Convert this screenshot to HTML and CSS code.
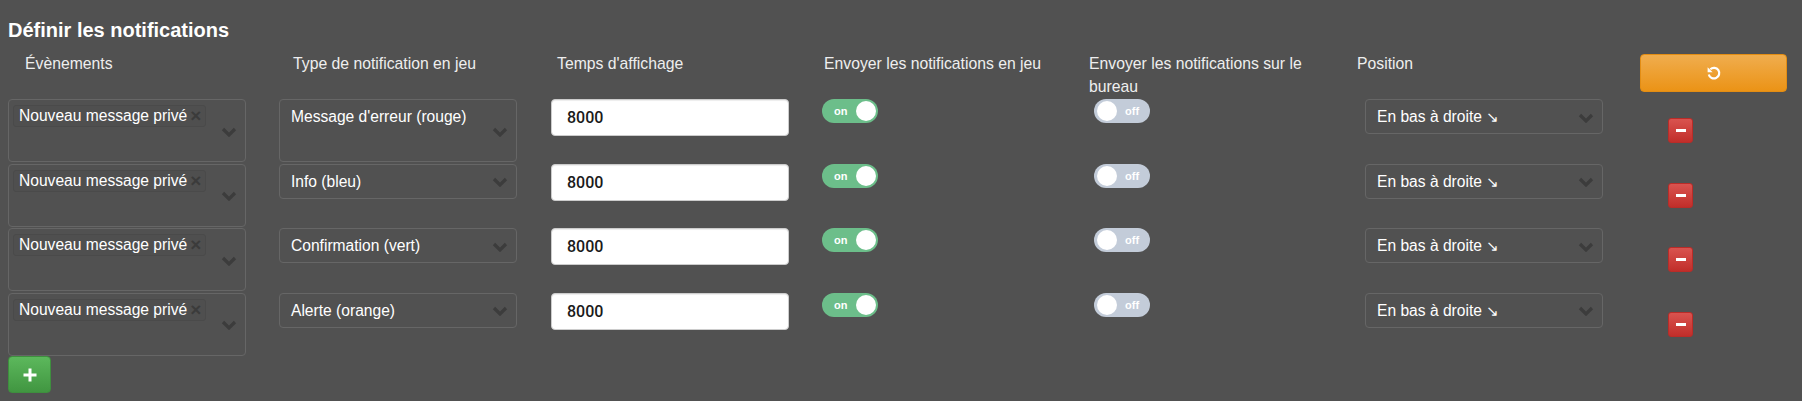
FILE: index.html
```html
<!DOCTYPE html>
<html lang="fr">
<head>
<meta charset="utf-8">
<title>Définir les notifications</title>
<link rel="stylesheet" href="styles.css">
</head>
<body>
<div class="panel">
  <h2 class="title">Définir les notifications</h2>
  <div class="head">
    <div class="hcell">Évènements</div>
    <div class="hcell">Type de notification en jeu</div>
    <div class="hcell">Temps d'affichage</div>
    <div class="hcell">Envoyer les notifications en jeu</div>
    <div class="hcell wrap">Envoyer les notifications sur le bureau</div>
    <div class="hcell">Position</div>
    <div class="hcell"><button class="btn reset" aria-label="Réinitialiser"><svg width="16" height="16" viewBox="0 0 16 16"><path d="M4.3 4.3 A5.3 5.3 0 1 1 2.8 9.4" fill="none" stroke="#fff" stroke-width="2.2"/><path d="M1.6 2.2 L1.6 7.2 L6.6 7.2 Z" fill="#fff"/></svg></button></div>
  </div>

  <div class="rows">
    <div class="row">
      <div class="multi"><span class="chip">Nouveau message privé<span class="x">×</span></span><svg class="chev" viewBox="0 0 16 10"><path d="M2 2 L8 8 L14 2" fill="none" stroke="#3c3c3c" stroke-width="3.2"/></svg></div>
      <div class="select tall"><span class="label">Message d'erreur (rouge)</span><svg class="chev" viewBox="0 0 16 10"><path d="M2 2 L8 8 L14 2" fill="none" stroke="#3c3c3c" stroke-width="3.2"/></svg></div>
      <div class="field">8000</div>
      <div class="toggle on"><span class="tt">on</span><span class="knob"></span></div>
      <div class="toggle off"><span class="knob"></span><span class="tt">off</span></div>
      <div class="select"><span class="label">En bas à droite <span class="arr">↘</span></span><svg class="chev" viewBox="0 0 16 10"><path d="M2 2 L8 8 L14 2" fill="none" stroke="#3c3c3c" stroke-width="3.2"/></svg></div>
      <button class="btn minus" aria-label="Supprimer"><span class="bar"></span></button>
    </div>
    <div class="row">
      <div class="multi"><span class="chip">Nouveau message privé<span class="x">×</span></span><svg class="chev" viewBox="0 0 16 10"><path d="M2 2 L8 8 L14 2" fill="none" stroke="#3c3c3c" stroke-width="3.2"/></svg></div>
      <div class="select"><span class="label">Info (bleu)</span><svg class="chev" viewBox="0 0 16 10"><path d="M2 2 L8 8 L14 2" fill="none" stroke="#3c3c3c" stroke-width="3.2"/></svg></div>
      <div class="field">8000</div>
      <div class="toggle on"><span class="tt">on</span><span class="knob"></span></div>
      <div class="toggle off"><span class="knob"></span><span class="tt">off</span></div>
      <div class="select"><span class="label">En bas à droite <span class="arr">↘</span></span><svg class="chev" viewBox="0 0 16 10"><path d="M2 2 L8 8 L14 2" fill="none" stroke="#3c3c3c" stroke-width="3.2"/></svg></div>
      <button class="btn minus" aria-label="Supprimer"><span class="bar"></span></button>
    </div>
    <div class="row">
      <div class="multi"><span class="chip">Nouveau message privé<span class="x">×</span></span><svg class="chev" viewBox="0 0 16 10"><path d="M2 2 L8 8 L14 2" fill="none" stroke="#3c3c3c" stroke-width="3.2"/></svg></div>
      <div class="select"><span class="label">Confirmation (vert)</span><svg class="chev" viewBox="0 0 16 10"><path d="M2 2 L8 8 L14 2" fill="none" stroke="#3c3c3c" stroke-width="3.2"/></svg></div>
      <div class="field">8000</div>
      <div class="toggle on"><span class="tt">on</span><span class="knob"></span></div>
      <div class="toggle off"><span class="knob"></span><span class="tt">off</span></div>
      <div class="select"><span class="label">En bas à droite <span class="arr">↘</span></span><svg class="chev" viewBox="0 0 16 10"><path d="M2 2 L8 8 L14 2" fill="none" stroke="#3c3c3c" stroke-width="3.2"/></svg></div>
      <button class="btn minus" aria-label="Supprimer"><span class="bar"></span></button>
    </div>
    <div class="row">
      <div class="multi"><span class="chip">Nouveau message privé<span class="x">×</span></span><svg class="chev" viewBox="0 0 16 10"><path d="M2 2 L8 8 L14 2" fill="none" stroke="#3c3c3c" stroke-width="3.2"/></svg></div>
      <div class="select"><span class="label">Alerte (orange)</span><svg class="chev" viewBox="0 0 16 10"><path d="M2 2 L8 8 L14 2" fill="none" stroke="#3c3c3c" stroke-width="3.2"/></svg></div>
      <div class="field">8000</div>
      <div class="toggle on"><span class="tt">on</span><span class="knob"></span></div>
      <div class="toggle off"><span class="knob"></span><span class="tt">off</span></div>
      <div class="select"><span class="label">En bas à droite <span class="arr">↘</span></span><svg class="chev" viewBox="0 0 16 10"><path d="M2 2 L8 8 L14 2" fill="none" stroke="#3c3c3c" stroke-width="3.2"/></svg></div>
      <button class="btn minus" aria-label="Supprimer"><span class="bar"></span></button>
    </div>
  </div>

  <button class="btn add" aria-label="Ajouter"><svg width="14" height="14" viewBox="0 0 14 14"><path d="M7 0.5 V13.5 M0.5 7 H13.5" stroke="#fff" stroke-width="3"/></svg></button>
</div>
</body>
</html>
```

FILE: styles.css
```css
html, body {
  margin: 0;
  padding: 0;
  background: #515151;
}

body {
  font-family: "Liberation Sans", Arial, sans-serif;
  color: #f0f0f0;
  width: 1802px;
  height: 401px;
  overflow: hidden;
}

.panel {
  padding: 18px 8px 0 8px;
}

.title {
  margin: 0;
  font-size: 20px;
  line-height: 24px;
  font-weight: bold;
  color: #fff;
}

.head {
  display: grid;
  grid-template-columns: 268px 264px 267px 265px 268px 283px 147px;
  padding-left: 17px;
  margin-top: 10px;
  height: 47px;
}

.hcell {
  font-size: 15.75px;
  line-height: 23px;
  color: #eeeeee;
}

.hcell.wrap {
  padding-right: 40px;
}

.btn {
  border: 1px solid transparent;
  border-radius: 4px;
  padding: 0;
  margin: 0;
  display: flex;
  align-items: center;
  justify-content: center;
  cursor: pointer;
}

.reset {
  width: 147px;
  height: 38px;
  margin-top: 2px;
  background: linear-gradient(#f0ad4e, #eb9316);
  border-color: #e38d13;
}

.rows {
  display: flex;
  flex-direction: column;
  gap: 1.5px;
}

.row {
  display: grid;
  grid-template-columns: 271px 272px 271px 272px 271px 303px 25px;
  align-items: start;
  height: 63px;
}

.multi {
  box-sizing: border-box;
  width: 238px;
  height: 63px;
  border: 1px solid #666;
  border-radius: 4px;
  position: relative;
  padding: 5px 4px;
}

.chip {
  display: inline-flex;
  align-items: center;
  box-sizing: border-box;
  height: 22px;
  padding: 0 4px 0 5px;
  border: 1px solid #4a4a4a;
  border-radius: 3px;
  background: #4f4f4f;
  font-size: 15.6px;
  color: #fff;
  white-space: nowrap;
}

.chip .x {
  font-size: 19px;
  line-height: 16px;
  font-weight: bold;
  color: #3b3b3b;
  margin-left: 3px;
}

.chev {
  position: absolute;
  right: 8px;
  top: 50%;
  width: 16px;
  height: 10px;
  margin-top: -4px;
}

.select {
  box-sizing: border-box;
  width: 238px;
  height: 35px;
  border: 1px solid #666;
  border-radius: 4px;
  position: relative;
  padding: 0 11px;
  font-size: 15.6px;
  line-height: 33px;
  color: #fff;
  white-space: nowrap;
}

.select.tall {
  height: 63px;
}

.select .label {
  display: block;
}

.arr {
  font-family: "DejaVu Sans", sans-serif;
  font-size: 15px;
}

.field {
  box-sizing: border-box;
  width: 238px;
  height: 37px;
  background: #fff;
  border: 1px solid #ccc;
  border-radius: 4px;
  box-shadow: inset 0 1px 1px rgba(0, 0, 0, 0.075);
  padding-left: 15px;
  font-family: Roboto, "Liberation Sans", sans-serif;
  font-size: 16px;
  font-weight: 500;
  line-height: 35px;
  color: #1a1a1a;
}

.toggle {
  width: 56px;
  height: 24px;
  border-radius: 12px;
  box-sizing: border-box;
  display: flex;
  align-items: center;
  padding: 0 2px;
  font-size: 11px;
  font-weight: bold;
  color: #fff;
}

.toggle.on {
  background: #6cbe8a;
  justify-content: space-between;
  padding-left: 12px;
}

.toggle.off {
  background: #c3ccd9;
  padding-left: 3px;
}

.toggle.off .tt {
  margin-left: 8px;
}

.knob {
  width: 20px;
  height: 20px;
  border-radius: 50%;
  background: #fff;
}

.minus {
  width: 25px;
  height: 25px;
  margin-top: 19px;
  border-radius: 3px;
  background: linear-gradient(#d9534f, #c12e2a);
  border-color: #b92c28;
}

.minus .bar {
  width: 10px;
  height: 3px;
  background: #fff;
}

.add {
  width: 43px;
  height: 37px;
  margin-top: 0.5px;
  background: linear-gradient(#5cb85c, #419641);
  border-color: #3e8f3e;
}
```
